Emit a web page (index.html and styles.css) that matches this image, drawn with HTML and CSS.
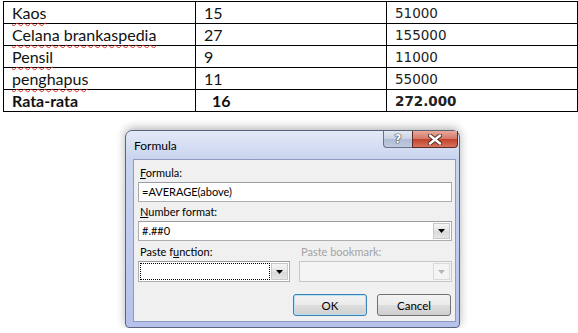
FILE: index.html
```html
<!DOCTYPE html>
<html lang="id">
<head>
    <meta charset="UTF-8">
    <meta name="viewport" content="width=device-width, initial-scale=1.0">
    <title>Formula</title>
    <link rel="stylesheet" href="styles.css">
</head>
<body>

    <!-- Tabel barang -->
    <table class="sheet">
        <colgroup>
            <col class="c1"><col class="c2"><col class="c3">
        </colgroup>
        <tr>
            <td><span class="typo">Kaos</span></td>
            <td>15</td>
            <td class="num">51000</td>
        </tr>
        <tr>
            <td><span class="typo">Celana brankaspedia</span></td>
            <td>27</td>
            <td class="num">155000</td>
        </tr>
        <tr>
            <td><span class="typo">Pensil</span></td>
            <td>9</td>
            <td class="num">11000</td>
        </tr>
        <tr>
            <td><span class="typo">penghapus</span></td>
            <td>11</td>
            <td class="num">55000</td>
        </tr>
        <tr class="total">
            <td>Rata-rata</td>
            <td class="indent">16</td>
            <td class="num">272.000</td>
        </tr>
    </table>

    <!-- Dialog Formula -->
    <div class="dialog">
        <div class="titlebar">
            <span class="title">Formula</span>
            <div class="caption-buttons">
                <div class="cap-btn help">?</div>
                <div class="cap-btn close">
                    <svg width="14" height="11" viewBox="0 0 14 11">
                        <path d="M2 1.5 L12 9.5 M12 1.5 L2 9.5" stroke="#4b2a25" stroke-width="4.2" stroke-linecap="round"/>
                        <path d="M2 1.5 L12 9.5 M12 1.5 L2 9.5" stroke="#fff" stroke-width="2.4" stroke-linecap="round"/>
                    </svg>
                </div>
            </div>
        </div>

        <div class="client">
            <div class="label"><u>F</u>ormula:</div>
            <div class="field">=AVERAGE(above)</div>

            <div class="label"><u>N</u>umber format:</div>
            <div class="field combo">
                <span class="value">#.##0</span>
                <span class="drop"><svg width="7" height="4" viewBox="0 0 7 4"><polygon points="0,0 7,0 3.5,4" fill="#000"/></svg></span>
            </div>

            <div class="pair">
                <div>
                    <div class="label">Paste f<u>u</u>nction:</div>
                    <div class="field combo">
                        <span class="value focus"></span>
                        <span class="drop"><svg width="7" height="4" viewBox="0 0 7 4"><polygon points="0,0 7,0 3.5,4" fill="#000"/></svg></span>
                    </div>
                </div>
                <div>
                    <div class="label disabled">Paste bookmark:</div>
                    <div class="field combo off">
                        <span class="value"></span>
                        <span class="drop"><svg width="7" height="4" viewBox="0 0 7 4"><polygon points="0,0 7,0 3.5,4" fill="#b4b4b4"/></svg></span>
                    </div>
                </div>
            </div>

            <div class="actions">
                <button class="btn default">OK</button>
                <button class="btn">Cancel</button>
            </div>
        </div>
    </div>

</body>
</html>
```

FILE: styles.css
```css
/* Reset */
* {
    box-sizing: border-box;
}

body {
    margin: 0;
    background-color: #ffffff;
    color: #000;
}

/* Table section */
.sheet {
    margin: 1px 0 0 3px;
    width: 574px;
    border-collapse: collapse;
    table-layout: fixed;
}

.sheet .c1 { width: 192px; }
.sheet .c2 { width: 191px; }
.sheet .c3 { width: 191px; }

.sheet td {
    border: 1px solid #000;
    height: 22px;
    padding: 0 8px;
    font-family: 'Lato', sans-serif;
    font-size: 16px;
    line-height: 20px;
    vertical-align: middle;
    white-space: nowrap;
    color: #111;
}

.sheet td.num {
    font-family: 'DejaVu Sans', sans-serif;
    font-size: 13.5px;
    color: #222;
}

.sheet .total td {
    font-weight: bold;
}

.sheet td.indent {
    padding-left: 16px;
}

.typo {
    text-decoration: underline wavy #e0281e;
    text-decoration-thickness: 1px;
    text-underline-offset: 3px;
    text-decoration-skip-ink: none;
}

/* Dialog window */
.dialog {
    width: 335px;
    margin: 18px 0 0 125px;
    padding: 0 3px 5px 7px;
    border: 1px solid #59637a;
    border-radius: 7px 7px 4px 4px;
    background: linear-gradient(#e2e9f7, #c9d4ef 28px, #b6c1ec);
    box-shadow: 0 -2px 10px rgba(0, 0, 0, 0.3);
    font-family: 'Lato', sans-serif;
    font-size: 11px;
}

.titlebar {
    display: flex;
    justify-content: space-between;
    align-items: flex-start;
    height: 28px;
}

.title {
    padding: 7px 0 0 1px;
    font-size: 12px;
    line-height: 16px;
}

.caption-buttons {
    display: flex;
    margin-right: -2px;
}

.cap-btn {
    height: 17px;
    border: 1px solid #6b7386;
    border-top: none;
    display: flex;
    align-items: center;
    justify-content: center;
}

.cap-btn.help {
    width: 29px;
    border-radius: 0 0 0 4px;
    border-right: none;
    background: linear-gradient(#e3e8f2, #c8d1e3 50%, #b0bcd4 51%, #bfcae0);
    color: #fff;
    font-family: 'DejaVu Sans', sans-serif;
    font-weight: bold;
    font-size: 12px;
    text-shadow: 0 0 1px #3c4252, 0 0 1px #3c4252, 0 0 1px #3c4252, 0 0 1px #3c4252;
}

.cap-btn.close {
    width: 46px;
    border-radius: 0 0 4px 0;
    border-color: #5e2b24;
    background: linear-gradient(#e9a99a, #d47766 50%, #c2402a 51%, #d8745f);
}

/* Client area */
.client {
    background-color: #f0f0f0;
    border: 1px solid #8e9ac2;
    padding: 5px 3px 5px 5px;
}

.label {
    line-height: 16px;
    padding-left: 1px;
    margin-top: 2px;
}

.label:first-child {
    margin-top: 0;
}

.label.disabled {
    color: #a3a3a3;
}

.field {
    height: 20px;
    margin-top: 1px;
    background-color: #fff;
    border: 1px solid #abadb3;
    border-top-color: #9a9ca3;
    padding-left: 3px;
    line-height: 18px;
    margin-left: -1px;
}

.combo {
    display: flex;
    padding: 1px;
}

.combo .value {
    flex: 1;
    padding-left: 2px;
    line-height: 16px;
}

.combo .value.focus {
    border: 1px dotted #000;
    margin-right: 1px;
}

.combo .drop {
    width: 17px;
    border: 1px solid #c9c9c9;
    background: linear-gradient(#f6f6f6, #e4e4e4 50%, #d8d8d8 51%, #e6e6e6);
    display: flex;
    align-items: center;
    justify-content: center;
}

.combo.off {
    background-color: #f4f4f4;
    border-color: #c3c6ca;
}

.combo.off .drop {
    background: #f4f4f4;
    border-color: #dadada;
}

.pair {
    display: grid;
    grid-template-columns: 151px 152px;
    gap: 10px;
    margin-top: 3px;
}

.pair .field {
    height: 21px;
}

/* Buttons */
.actions {
    display: flex;
    justify-content: flex-end;
    gap: 10px;
    margin-top: 12px;
    padding-right: 1px;
}

.btn {
    width: 74px;
    height: 22px;
    border: 1px solid #707070;
    border-radius: 3px;
    background: linear-gradient(#f2f2f2, #ebebeb 50%, #dddddd 51%, #cfcfcf);
    font-family: 'Lato', sans-serif;
    font-size: 11.5px;
    color: #000;
    padding: 0;
}

.btn.default {
    border-color: #3c7fb1;
    box-shadow: inset 0 0 0 1px #b6e2f8;
}
```
